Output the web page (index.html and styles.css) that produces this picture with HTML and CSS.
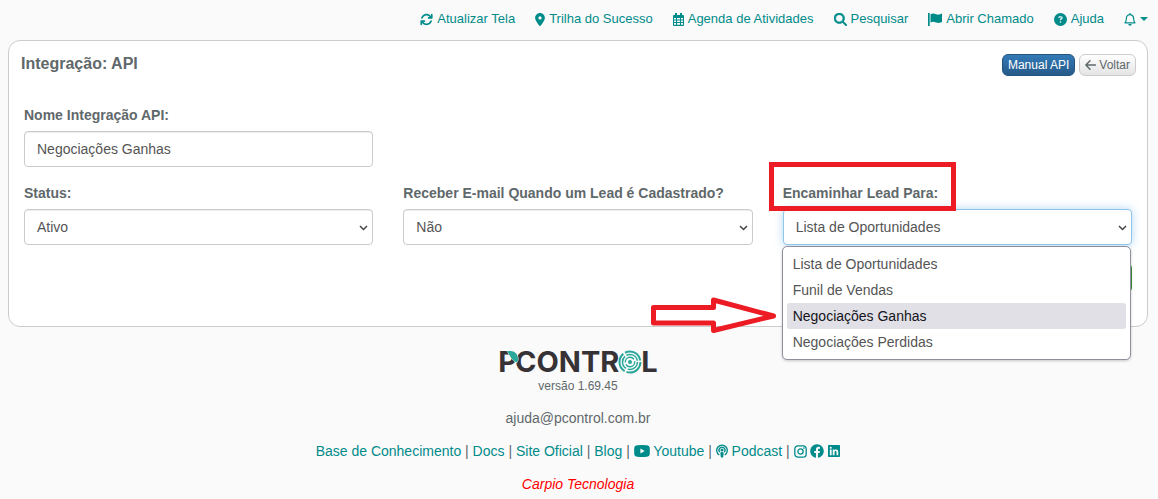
FILE: index.html
```html
<!DOCTYPE html>
<html lang="pt-BR">
<head>
<meta charset="utf-8">
<title>Integração: API</title>
<link rel="stylesheet" href="styles.css">
</head>
<body>
<nav class="topbar">
  <a class="nav-link" href="#"><svg class="icon" width="13" height="13" viewBox="0 0 512 512"><path d="M105.1 202.6c7.7-21.8 20.2-42.3 37.8-59.8c62.5-62.5 163.8-62.5 226.3 0L386.3 160H336c-17.700 0-32 14.300-32 32s14.300 32 32 32H463.500h.4c17.700 0 32-14.300 32-32V64c0-17.700-14.300-32-32-32s-32 14.300-32 32v51.200L414.400 97.600c-87.500-87.500-229.300-87.500-316.800 0C73.200 122 55.600 150.700 44.800 181.400c-5.900 16.700 2.900 34.900 19.500 40.800s34.900-2.900 40.800-19.500zM39 289.300c-5 1.500-9.800 4.200-13.700 8.200c-4 4-6.700 8.800-8.100 14c-.3 1.200-.6 2.500-.8 3.800c-.3 1.700-.4 3.400-.4 5.100V448c0 17.700 14.300 32 32 32s32-14.300 32-32V396.900l17.600 17.500c87.500 87.400 229.300 87.400 316.700 0c24.400-24.400 42.100-53.100 52.900-83.700c5.900-16.700-2.900-34.900-19.500-40.800s-34.900 2.900-40.800 19.500c-7.700 21.800-20.200 42.300-37.800 59.800c-62.500 62.500-163.800 62.500-226.300 0L125.600 352H176c17.700 0 32-14.300 32-32s-14.300-32-32-32H48.400c-1.600 0-3.200 .1-4.800 .3s-3.100 .5-4.600 1z"/></svg>Atualizar Tela</a>
  <a class="nav-link" href="#"><svg class="icon" width="10" height="13" viewBox="0 0 384 512"><path d="M215.7 499.2C267 435 384 279.4 384 192C384 86 298 0 192 0S0 86 0 192c0 87.4 117 243 168.3 307.2c12.3 15.3 35.1 15.3 47.4 0zM192 128a64 64 0 1 1 0 128 64 64 0 1 1 0-128z"/></svg>Trilha do Sucesso</a>
  <a class="nav-link" href="#"><svg class="icon" width="11" height="13" viewBox="0 0 11 13"><path fill-rule="evenodd" d="M2 0h2v2h3V0h2v2h1a1 1 0 0 1 1 1v9a1 1 0 0 1-1 1H1a1 1 0 0 1-1-1V3a1 1 0 0 1 1-1h1zM1 5v1.500h2V5zM4 5v1.500h3V5zM8 5v1.500h2V5zM1 7.500V9h2V7.500zM4 7.500V9h3V7.500zM8 7.500V9h2V7.500zM1 10v1.700h2V10zM4 10v1.700h3V10zM8 10v1.700h2V10z"/></svg>Agenda de Atividades</a>
  <a class="nav-link" href="#"><svg class="icon" width="13" height="13" viewBox="0 0 512 512"><path stroke="currentColor" stroke-width="24" d="M416 208c0 45.900-14.900 88.300-40 122.700L502.600 457.400c12.500 12.500 12.500 32.800 0 45.300s-32.800 12.500-45.300 0L330.700 376c-34.400 25.200-76.800 40-122.700 40C93.100 416 0 322.900 0 208S93.100 0 208 0S416 93.100 416 208zM208 352a144 144 0 1 0 0-288 144 144 0 1 0 0 288z"/></svg>Pesquisar</a>
  <a class="nav-link" href="#"><svg class="icon" width="14" height="13" viewBox="0 0 14 13"><path d="M0 0h1.700v13H0zM2.500 1.200C5 0 6.300.6 8 1.200c2 .7 3.500.6 6-.6v8.300c-2.500 1.200-4 1.300-6 .6-1.700-.6-3-1.200-5.500 0z"/></svg>Abrir Chamado</a>
  <a class="nav-link" href="#"><svg class="icon" width="13" height="13" viewBox="0 0 512 512"><path d="M256 512A256 256 0 1 0 256 0a256 256 0 1 0 0 512zM169.800 165.300c7.900-22.300 29.100-37.300 52.800-37.300h58.300c34.900 0 63.100 28.300 63.100 63.100c0 22.600-12.100 43.500-31.700 54.800L280 264.400c-.2 13-10.900 23.600-24 23.600c-13.300 0-24-10.700-24-24V250.500c0-8.600 4.600-16.500 12.100-20.800l44.300-25.400c4.700-2.700 7.600-7.700 7.600-13.100c0-8.400-6.800-15.100-15.100-15.100H222.600c-3.400 0-6.400 2.100-7.500 5.300l-.4 1.200c-4.400 12.500-18.200 19-30.600 14.600s-19-18.200-14.600-30.600l.4-1.200zM224 352a32 32 0 1 1 64 0 32 32 0 1 1-64 0z"/></svg>Ajuda</a>
  <a class="nav-link" href="#" aria-label="Notificações"><svg class="icon" width="12" height="13" viewBox="0 0 12 13"><path d="M6 0v1.500M1 9.800h10C9.800 8.600 9.600 7.500 9.600 5.300a3.600 3.600 0 0 0-7.200 0C2.400 7.500 2.200 8.600 1 9.800z" fill="none" stroke="currentColor" stroke-width="1.200" stroke-linejoin="round"/><path d="M4.300 11h3.400a1.700 1.700 0 0 1-3.400 0z"/></svg><svg class="icon" width="8" height="4" viewBox="0 0 8 4"><path d="M0 0h8L4 4z"/></svg></a>
</nav>

<main class="card">
  <header class="card-head">
    <h1 class="card-title">Integração: API</h1>
    <div class="actions">
      <button class="btn btn-primary" type="button">Manual API</button>
      <button class="btn btn-default" type="button"><svg width="11" height="10" viewBox="0 0 11 10"><path d="M5 .8.900 5 5 9.200M1 5h9.500" fill="none" stroke="currentColor" stroke-width="1.500" stroke-linecap="round" stroke-linejoin="round"/></svg>Voltar</button>
    </div>
  </header>
  <form class="form">
    <div class="grid">
      <div class="field first">
        <label for="nome">Nome Integração API:</label>
        <input class="control" id="nome" type="text" value="Negociações Ganhas">
      </div>
      <div class="field">
        <label for="status">Status:</label>
        <div class="select">
          <select class="control" id="status"><option>Ativo</option></select>
          <svg class="chevron" width="9" height="6" viewBox="0 0 9 6"><path d="M1 1l3.500 3.500L8 1"/></svg>
        </div>
      </div>
      <div class="field">
        <label for="email">Receber E-mail Quando um Lead é Cadastrado?</label>
        <div class="select">
          <select class="control" id="email"><option>Não</option></select>
          <svg class="chevron" width="9" height="6" viewBox="0 0 9 6"><path d="M1 1l3.500 3.500L8 1"/></svg>
        </div>
      </div>
      <div class="field marked">
        <label for="destino">Encaminhar Lead Para:</label>
        <div class="select">
          <select class="control active" id="destino"><option>Lista de Oportunidades</option></select>
          <svg class="chevron" width="9" height="6" viewBox="0 0 9 6"><path d="M1 1l3.500 3.500L8 1"/></svg>
          <ul class="menu" role="listbox">
            <li role="option">Lista de Oportunidades</li>
            <li role="option">Funil de Vendas</li>
            <li class="hover" role="option" aria-selected="true">Negociações Ganhas</li>
            <li role="option">Negociações Perdidas</li>
          </ul>
        </div>
        <svg class="arrow" width="128" height="40" viewBox="0 0 128 40"><path d="M3.500 12.500h60V5l60 16-60 14.500V28h-60z"/></svg>
      </div>
    </div>
    <button class="save" type="submit" aria-label="Salvar"></button>
  </form>
</main>

<footer class="footer">
  <div class="brand"><span class="brand-p">P<svg class="leaf" width="11" height="12" viewBox="0 0 11 12"><path d="M0 0h3c5 0 8 3 8 8 0 1-.3 2.500-1 3.500C4 9.500 3 4 0 0z"/></svg></span><span>CONTR</span><svg class="emblem" width="24" height="24" viewBox="0 0 24 24"><g fill="none" stroke="#2aa79b"><circle cx="12" cy="12" r="10.500" stroke-width="2" stroke-dasharray="20 2"/><circle cx="12" cy="12" r="7.500" stroke-width="1.500" stroke-dasharray="14 1.700"/><circle cx="12" cy="12" r="4.700" stroke-width="1.400" stroke-dasharray="12 2"/></g><circle cx="12" cy="12" r="2" fill="#2aa79b"/></svg><span>L</span></div>
  <p class="version">versão 1.69.45</p>
  <p class="mail">ajuda@pcontrol.com.br</p>
  <p class="links">
    <a href="#">Base de Conhecimento</a> | <a href="#">Docs</a> | <a href="#">Site Oficial</a> | <a href="#">Blog</a> |
    <a href="#"><svg class="video" width="16" height="12" viewBox="0 0 16 12"><path fill-rule="evenodd" d="M3 .3Q8-.2 13 .3q2.500.2 2.700 2.200.3 3.500 0 7-.2 2-2.700 2.200-5 .5-10 0Q.500 11.500.300 9.500q-.3-3.500 0-7Q.500.500 3 .3zM6.400 3.500v5l4.300-2.500z"/></svg> Youtube</a> |
    <a href="#"><svg width="12" height="14" viewBox="0 0 12 14"><g fill="none" stroke="currentColor" stroke-width="1.300"><path d="M3.300 11A5.300 5.300 0 1 1 8.700 11"/><path d="M3.700 8.200a3 3 0 1 1 4.600 0"/></g><circle cx="6" cy="6" r="1.500"/><path d="M4.300 8.500q1.700-1 3.400 0L7.200 13q-1.200 1.500-2.400 0z"/></svg> Podcast</a> |
    <a href="#" aria-label="Instagram"><svg width="13" height="13" viewBox="0 0 13 13"><g fill="none" stroke="currentColor" stroke-width="1.300"><rect x=".8" y=".8" width="11.400" height="11.400" rx="3.200"/><circle cx="6.500" cy="6.500" r="2.600"/></g><circle cx="9.900" cy="3.100" r=".8"/></svg></a>
    <a href="#" aria-label="Facebook"><svg width="14" height="14" viewBox="0 0 512 512"><path d="M504 256C504 119 393 8 256 8S8 119 8 256c0 123.780 90.690 226.380 209.250 245V327.690h-63V256h63v-54.640c0-62.150 37-96.480 93.670-96.480 27.140 0 55.520 4.840 55.520 4.840v61h-31.280c-30.800 0-40.410 19.120-40.410 38.730V256h68.780l-11 71.690h-57.780V501C413.310 482.380 504 379.780 504 256z"/></svg></a>
    <a href="#" aria-label="LinkedIn"><svg width="12" height="14" viewBox="0 0 448 512"><path d="M416 32H31.900C14.300 32 0 46.500 0 64.300v383.400C0 465.500 14.300 480 31.900 480H416c17.600 0 32-14.500 32-32.300V64.300c0-17.800-14.400-32.300-32-32.300zM135.400 416H69V202.200h66.500V416zm-33.200-243c-21.300 0-38.500-17.300-38.500-38.500S80.900 96 102.200 96c21.200 0 38.500 17.300 38.500 38.500 0 21.300-17.200 38.500-38.500 38.500zm282.100 243h-66.400V312c0-24.800-.5-56.700-34.500-56.700-34.600 0-39.900 27-39.900 54.900V416h-66.400V202.200h63.700v29.200h.9c8.900-16.800 30.600-34.500 62.200-34.500 66.500 0 78.900 43.800 78.900 100.900V416z"/></svg></a>
  </p>
  <p class="company">Carpio Tecnologia</p>
</footer>
</body>
</html>
```
FILE: styles.css
```css
*,
*::before {
  box-sizing: border-box;
}

body {
  margin: 0;
  background: #fafafa;
  color: #5f686b;
  font-family: "Liberation Sans", Arial, sans-serif;
  font-size: 14px;
  line-height: 20px;
}

svg {
  flex-shrink: 0;
  fill: currentColor;
}

a {
  color: #008b8b;
  text-decoration: none;
}

.topbar {
  display: flex;
  justify-content: flex-end;
  gap: 20px;
  padding: 9px 10px 11px;
  font-size: 13px;
}

.nav-link {
  display: flex;
  align-items: center;
  gap: 4px;
}

.card {
  margin: 0 10px 0 8px;
  border: 1px solid #ccc;
  border-radius: 12px;
  background: #fff;
}

.card-head {
  display: flex;
  justify-content: space-between;
  padding: 13px 11px 0 12px;
}

.card-title {
  margin: 0;
  font-size: 16px;
  line-height: 20px;
}

.actions {
  display: flex;
  gap: 4px;
}

.btn {
  display: flex;
  align-items: center;
  gap: 3px;
  height: 22px;
  padding: 0 5px;
  border: 1px solid #ccc;
  border-radius: 6px;
  font: 12px/18px "Liberation Sans", Arial, sans-serif;
}

.btn-primary {
  border-color: #245580;
  background: linear-gradient(#337ab7, #265a88);
  color: #fff;
}

.btn-default {
  background: linear-gradient(#fff, #e4e4e4);
  color: #5f686b;
}

.form {
  padding: 29px 15px 34px;
}

.grid {
  display: grid;
  grid-template-columns: repeat(3, 1fr);
  gap: 16px 30px;
}

.first {
  grid-column: 1;
}

.first + .field {
  grid-column: 1;
}

.field {
  display: flex;
  flex-direction: column;
  gap: 6px;
}

.field label {
  font-weight: bold;
}

.control {
  display: block;
  width: 100%;
  height: 36px;
  padding: 0 12px;
  border: 1px solid #c8cccf;
  border-radius: 4px;
  background: #fff;
  box-shadow: inset 0 1px 1px rgba(0, 0, 0, 0.075);
  color: #555;
  font: 14px/20px "Liberation Sans", Arial, sans-serif;
  appearance: none;
}

.active {
  border-color: #8ec5ea;
  box-shadow: 0 0 8px rgba(102, 175, 233, 0.5);
}

.select,
.marked {
  position: relative;
}

.chevron {
  position: absolute;
  right: 5px;
  top: 16px;
  fill: none;
  stroke: #444;
  stroke-width: 1.5;
}

.menu {
  position: absolute;
  z-index: 1;
  top: 37px;
  left: -1px;
  width: 100%;
  margin: 0;
  padding: 4px;
  border: 1px solid #8f8f9d;
  border-radius: 5px;
  background: #fff;
  box-shadow: 0 1px 3px rgba(0, 0, 0, 0.2);
  color: #555;
  list-style: none;
}

.menu li {
  padding: 3px 6px;
  border-radius: 3px;
}

.menu .hover {
  background: #e0e0e6;
  color: #15141a;
}

.marked::before {
  content: "";
  position: absolute;
  z-index: 2;
  top: -21px;
  left: -14px;
  width: 187px;
  height: 49px;
  border: 5px solid #ed1c24;
}

.arrow {
  position: absolute;
  z-index: 2;
  top: 112px;
  left: -133px;
  fill: none;
  stroke: #ed1c24;
  stroke-width: 5;
  stroke-linejoin: round;
}

.save {
  display: block;
  width: 70px;
  height: 28px;
  margin: 19px 0 0 auto;
  border: 1px solid #3e8f3e;
  border-radius: 4px;
  background: #5cb85c;
}

.footer {
  display: flex;
  flex-direction: column;
  align-items: center;
  margin: 0 10px 0 8px;
  padding-top: 23px;
}

.footer p {
  margin: 0;
}

.brand {
  display: flex;
  align-items: center;
  height: 24px;
  color: #363235;
  font: bold 29px/24px Inter, sans-serif;
}

.brand-p {
  position: relative;
  margin-right: -2px;
}

.emblem {
  margin: 0 -1px;
}

.leaf {
  position: absolute;
  top: 1px;
  right: -1px;
  overflow: visible;
  fill: #2aa79b;
  stroke: #fafafa;
  stroke-width: 1;
  paint-order: stroke;
}

.footer .version {
  margin-top: 2px;
  font-size: 12px;
}

.footer .mail,
.footer .links,
.footer .company {
  margin-top: 13px;
}

.footer .mail {
  margin-top: 12px;
}

.links svg {
  vertical-align: -2px;
}

.links .video {
  vertical-align: -1px;
}

.company {
  color: #f00;
  font-style: italic;
}
```
